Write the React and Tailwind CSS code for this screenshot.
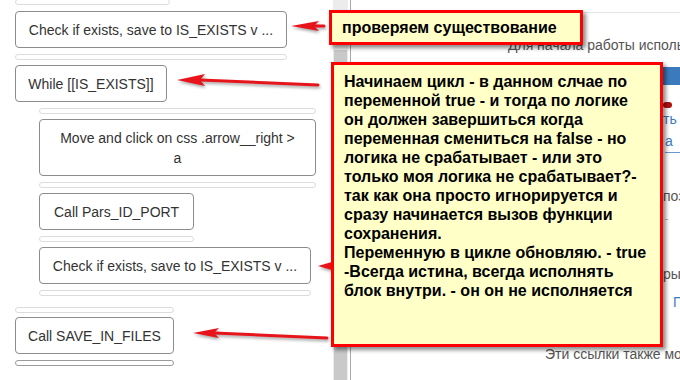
import React from "react";

function Bar({ className }) {
  return <div className={"h-[6px] rounded-full border border-[#dcdcdc] bg-white " + className} />;
}

function Box({ className, children }) {
  return (
    <div
      className={
        "flex items-center justify-center text-center rounded-[4px] border border-[#8c8c8c] bg-white text-[14px] leading-[20px] text-[#333] " +
        className
      }
    >
      {children}
    </div>
  );
}

function Arrow({ tx, ty, L, W, n, ex, ey, sw = 3 }) {
  const bx = tx + L - n;
  return (
    <g>
      <line x1={bx} y1={ty} x2={ex} y2={ey} stroke="#e8141b" strokeWidth={sw} strokeLinecap="round" />
      <polygon
        points={`${tx},${ty} ${tx + L},${ty - W} ${bx},${ty} ${tx + L},${ty + W}`}
        fill="#e8141b"
      />
    </g>
  );
}

export default function App() {
  return (
    <div
      className="relative w-[680px] h-[380px] overflow-hidden bg-white flex"
      style={{ fontFamily: '"Liberation Sans", Arial, sans-serif' }}
    >
      {/* left flow panel */}
      <div className="w-[333px] shrink-0 pl-[15px] flex flex-col items-start">
        <Bar className="w-[155px] -mt-[1px]" />
        <Box className="mt-[6px] w-[272px] h-[37px]">Check if exists, save to IS_EXISTS v ...</Box>
        <Bar className="mt-[6px] w-[272px]" />
        <Box className="mt-[5px] w-[152px] h-[37px]">While [[IS_EXISTS]]</Box>
        <div className="ml-[24px] flex flex-col items-start">
          <Bar className="mt-[6px] w-[277px]" />
          <Box className="mt-[5px] w-[277px] h-[57px] px-[15px]">Move and click on css .arrow__right &gt; a</Box>
          <Bar className="mt-[6px] w-[277px]" />
          <Box className="mt-[5px] w-[155px] h-[37px]">Call Pars_ID_PORT</Box>
          <Bar className="mt-[6px] w-[155px]" />
          <Box className="mt-[5px] w-[272px] h-[37px]">Check if exists, save to IS_EXISTS v ...</Box>
          <Bar className="mt-[6px] w-[272px]" />
        </div>
        <Bar className="mt-[11px] w-[159px]" />
        <Box className="mt-[4px] w-[159px] h-[37px]">Call SAVE_IN_FILES</Box>
        <div className="mt-[6px] w-[159px] h-[6px] rounded-full border border-[#9a9a9a]" />
      </div>

      {/* scrollbar */}
      <div className="w-[15px] shrink-0 bg-[#ececec] flex flex-col pt-[50px]">
        <div className="mx-[1px] flex-1 bg-[#c9c9c9]" />
      </div>
      <div className="w-[2px] shrink-0" />

      {/* right panel */}
      <div className="flex-1 border-l border-[#a8a8a8] flex flex-col overflow-hidden whitespace-nowrap text-[14px] leading-[18px] text-[#555]">
        <div className="h-[13px] border-b border-[#e4e4e4]" />
        <div className="mt-[23px] pl-[157px]">Для начала работы использовать</div>
        <div className="mt-[13px] ml-[154px] h-[18px] bg-[#3b7bbd]" />
        <div className="mt-[17px] ml-[312px] w-[9px] h-[6px] rounded-full bg-[#b01010]" />
        <div className="mt-[2px] pl-[312px] text-[#3a7bbf]">ть пароль</div>
        <div className="mt-[4px] pl-[314px] text-[#3a7bbf]">а</div>
        <div className="mt-[2px] ml-[314px] h-px bg-[#6b98c8]" />
        <div className="mt-[34px] pl-[312px]">позже</div>
        <div className="mt-[14px] ml-[314px] w-[3px] h-px bg-[#bbb]" />
        <div className="mt-[45px] pl-[312px]">ры</div>
        <div className="mt-[10px] pl-[322px] text-[#3a7bbf]">П</div>
        <div className="mt-[34px] pl-[194px]">Эти ссылки также можно</div>
      </div>

      {/* arrows */}
      <svg
        className="absolute inset-0 pointer-events-none"
        width="680"
        height="380"
        style={{ filter: "drop-shadow(1px 2px 1.5px rgba(0,0,0,0.35))" }}
      >
        <Arrow tx={291} ty={26} L={28} W={5} n={5} ex={324} ey={26} />
        <Arrow tx={177} ty={80} L={28} W={6} n={5} ex={318} ey={85} />
        <Arrow tx={318} ty={266} L={24} W={7} n={5} ex={345} ey={262} />
        <Arrow tx={193} ty={333} L={26} W={5} n={5} ex={327} ey={338} />
      </svg>

      {/* callouts */}
      <div
        className="absolute left-[329px] top-[10px] w-[254px] h-[35px] border-[3px] border-[#ff0000] bg-[#ffffc8] pl-[10px] flex items-center text-[16px] font-bold text-black shadow-[3px_3px_4px_rgba(0,0,0,0.45)]"
      >
        проверяем существование
      </div>
      <div
        className="absolute left-[331px] top-[62px] w-[332px] h-[285px] border-[3px] border-[#ff0000] bg-[#ffffc8] pl-[10px] pt-[7px] text-[16px] leading-[19px] font-bold text-black whitespace-nowrap shadow-[3px_3px_4px_rgba(0,0,0,0.45)]"
      >
        Начинаем цикл - в данном слчае по
        <br />
        переменной true - и тогда по логике
        <br />
        он должен завершиться когда
        <br />
        переменная смениться на false - но
        <br />
        логика не срабатывает - или это
        <br />
        только моя логика не срабатывает?-
        <br />
        так как она просто игнорируется и
        <br />
        сразу начинается вызов функции
        <br />
        сохранения.
        <br />
        Переменную в цикле обновляю. - true
        <br />
        -Всегда истина, всегда исполнять
        <br />
        блок внутри. - он он не исполняется
      </div>
    </div>
  );
}
